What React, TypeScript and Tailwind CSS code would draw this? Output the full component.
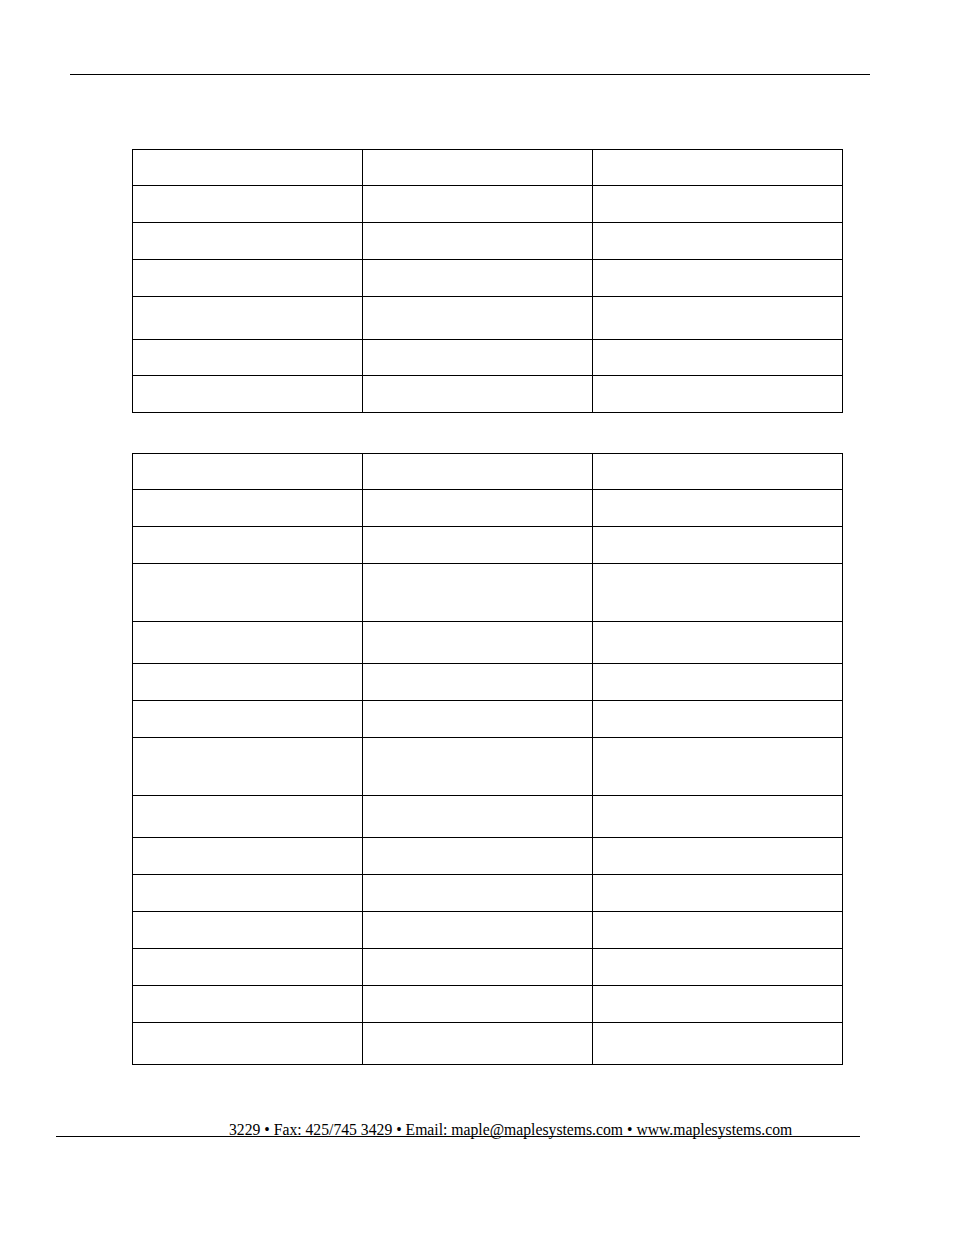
import React from 'react';

const table1 = [36, 37, 37, 37, 43, 36, 37];
const table2 = [36, 37, 37, 58, 42, 37, 37, 58, 42, 37, 37, 37, 37, 37, 42];

function GridTable({ rows }: { rows: number[] }) {
  return (
    <table className="ml-[132px] w-[710px] border-collapse table-fixed">
      <colgroup>
        <col className="w-[230px]" />
        <col className="w-[230px]" />
        <col className="w-[250px]" />
      </colgroup>
      <tbody>
        {rows.map((h, i) => (
          <tr key={i} style={{ height: h }}>
            <td className="border border-black p-0"></td>
            <td className="border border-black p-0"></td>
            <td className="border border-black p-0"></td>
          </tr>
        ))}
      </tbody>
    </table>
  );
}

export default function App() {
  return (
    <div className="w-[954px] h-[1235px] bg-white overflow-hidden">
      {/* header rule */}
      <div className="pt-[74px]">
        <div className="ml-[70px] w-[800px] h-px bg-black" />
      </div>

      <div className="mt-[74px]">
        <GridTable rows={table1} />
      </div>

      <div className="mt-[40px]">
        <GridTable rows={table2} />
      </div>

      {/* footer */}
      <div className="mt-[58px]">
        <p
          className="pl-[229px] text-[15.7px] leading-[13px] text-black whitespace-nowrap"
          style={{ fontFamily: '"Liberation Serif", "Times New Roman", serif' }}
        >
          3229 • Fax: 425/745 3429 • Email: maple@maplesystems.com • www.maplesystems.com
        </p>
        <div className="ml-[56px] w-[804px] h-px bg-black" />
      </div>
    </div>
  );
}
